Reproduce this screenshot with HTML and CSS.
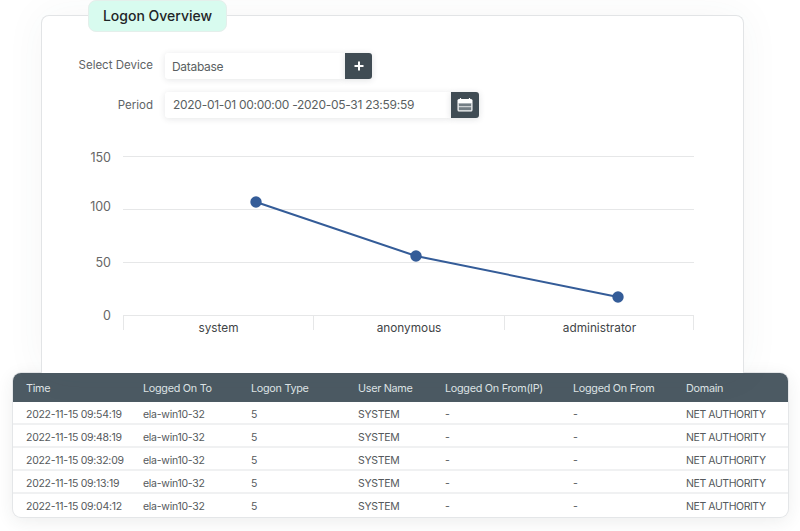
FILE: index.html
```html
<!DOCTYPE html>
<html lang="en">
<head>
<meta charset="utf-8">
<title>Logon Overview</title>
<link rel="stylesheet" href="styles.css">
</head>
<body>
<main class="stage">
  <section class="card">
    <h1 class="tab">Logon Overview</h1>
    <div class="form">
      <div class="field field-device">
        <label class="label">Select Device</label>
        <div class="input input-device">Database</div>
        <button class="btn" aria-label="Add">
          <svg width="12" height="12" viewBox="0 0 12 12"><path d="M6 1.500v9M1.500 6h9" stroke="#fff" stroke-width="2" fill="none"/></svg>
        </button>
      </div>
      <div class="field field-period">
        <label class="label">Period</label>
        <div class="input input-period">2020-01-01 00:00:00 -2020-05-31 23:59:59</div>
        <button class="btn btn-cal" aria-label="Calendar">
          <svg width="16" height="14" viewBox="0 0 16 14"><rect x="0.500" y="1" width="15" height="12.500" rx="1.500" fill="#fff"/><path d="M3.500 0v2M12.500 0v2" stroke="#fff" stroke-width="1.200"/><rect x="1.500" y="5" width="13" height="7.500" fill="#aab1b6"/><path d="M3 6v6M5 6v6M7 6v6M9 6v6M11 6v6M13 6v6" stroke="#3f4c55" stroke-width="1"/><path d="M1.500 8.700h13" stroke="#fff" stroke-width=".8"/></svg>
        </button>
      </div>
    </div>
    <svg class="chart" width="700" height="220" viewBox="42 140 700 220">
      <g class="grid">
        <path d="M123 156.500H694M123 209.500H694M123 262.500H694M123 315.500H694M123.500 315V330M313.500 315V330M504.500 315V330M693.500 315V330"/>
      </g>
      <g class="ylabels">
        <text x="111" y="162">150</text>
        <text x="111" y="211">100</text>
        <text x="111" y="267">50</text>
        <text x="111" y="320">0</text>
      </g>
      <g class="xlabels">
        <text x="218.500" y="332">system</text>
        <text x="409" y="332">anonymous</text>
        <text x="599.500" y="332">administrator</text>
      </g>
      <path class="line" d="M256 202L416 256L618 297"/>
      <g class="dots">
        <circle cx="256" cy="202" r="5.700"/>
        <circle cx="416" cy="256" r="5.700"/>
        <circle cx="618" cy="297" r="5.700"/>
      </g>
    </svg>
  </section>
  <section class="table">
    <div class="row head"><span>Time</span><span>Logged On To</span><span>Logon Type</span><span>User Name</span><span>Logged On From(IP)</span><span>Logged On From</span><span>Domain</span></div>
    <div class="row"><span>2022-11-15 09:54:19</span><span>ela-win10-32</span><span>5</span><span>SYSTEM</span><span>-</span><span>-</span><span>NET AUTHORITY</span></div>
    <div class="row"><span>2022-11-15 09:48:19</span><span>ela-win10-32</span><span>5</span><span>SYSTEM</span><span>-</span><span>-</span><span>NET AUTHORITY</span></div>
    <div class="row"><span>2022-11-15 09:32:09</span><span>ela-win10-32</span><span>5</span><span>SYSTEM</span><span>-</span><span>-</span><span>NET AUTHORITY</span></div>
    <div class="row"><span>2022-11-15 09:13:19</span><span>ela-win10-32</span><span>5</span><span>SYSTEM</span><span>-</span><span>-</span><span>NET AUTHORITY</span></div>
    <div class="row"><span>2022-11-15 09:04:12</span><span>ela-win10-32</span><span>5</span><span>SYSTEM</span><span>-</span><span>-</span><span>NET AUTHORITY</span></div>
  </section>
</main>
</body>
</html>
```
FILE: styles.css
```css
* { box-sizing: border-box; }
html, body { margin: 0; padding: 0; background: #fff; }
body { font-family: Inter, "Liberation Sans", sans-serif; color: #555; overflow: hidden; }
.stage { width: 800px; height: 531px; padding-top: 15px; overflow: hidden; }

.card {
  position: relative;
  width: 703px;
  height: 358px;
  margin-left: 41px;
  background: #fff;
  border: 1px solid #e2e4e6;
  border-bottom: 0;
  border-radius: 8px 8px 0 0;
  box-shadow: 0 0 40px rgba(60, 70, 80, .05);
}
.tab {
  position: absolute;
  left: 46px;
  top: -16px;
  width: 139px;
  height: 32px;
  margin: 0;
  padding-top: 6px;
  text-align: center;
  font-size: 14px;
  line-height: 17px;
  font-weight: 500;
  color: #1f2527;
  background: #d8fbef;
  border: 1px solid #e4efeb;
  border-radius: 8px;
}

.form { display: flex; flex-direction: column; gap: 13px; padding-top: 37px; }
.field { display: flex; align-items: stretch; height: 26px; }
.label {
  width: 111px;
  margin-right: 12px;
  text-align: right;
  font-size: 11.500px;
  line-height: 24px;
  color: #5e6366;
}
.field-period .label { line-height: 26px; }
.input {
  font-size: 12px;
  line-height: 27px;
  color: #5a5f62;
  background: #fff;
  border-radius: 3px 0 0 3px;
  box-shadow: 0 1px 6px rgba(40, 50, 60, .12);
}
.input-device { width: 180px; padding-left: 7px; letter-spacing: -.3px; }
.input-period { width: 286px; padding-left: 8px; letter-spacing: -.28px; line-height: 26px; }
.btn {
  display: flex;
  align-items: center;
  justify-content: center;
  width: 27px;
  padding: 0;
  border: 0;
  background: #404c54;
  border-radius: 0 3px 3px 0;
  box-shadow: 0 1px 6px rgba(40, 50, 60, .15);
}
.btn-cal { width: 28px; }

.chart { display: block; margin-top: 22px; }
.grid path { stroke: #e6e7e8; stroke-width: 1; fill: none; }
.ylabels text { font-size: 12.500px; fill: #666; text-anchor: end; }
.xlabels text { font-size: 11.800px; fill: #3f4446; text-anchor: middle; }
.line { fill: none; stroke: #345c98; stroke-width: 2; }
.dots circle { fill: #345c98; }

.table {
  width: 775px;
  height: 144px;
  margin-left: 13px;
  background: #fff;
  border-radius: 8px;
  box-shadow: 0 0 0 1px #e4e6e8, 0 4px 18px rgba(40, 50, 60, .09);
  overflow: hidden;
}
.row {
  display: grid;
  grid-template-columns: 117px 108px 107px 87px 128px 113px 1fr;
  align-items: center;
  height: 23px;
  padding: 4px 0 0 13px;
  font-size: 10.500px;
  letter-spacing: -.27px;
  color: #55595c;
  border-bottom: 2px solid #f0f1f2;
}
.row span:last-child { letter-spacing: -.42px; }
.row:last-child { border-bottom: 0; padding-top: 2px; }
.head {
  height: 29px;
  padding-top: 2px;
  font-size: 10.800px;
  letter-spacing: -.28px;
  color: #dfe4e6;
  background: #4c5a63;
  border-bottom: 0;
}
.head span:last-child { letter-spacing: -.28px; }
```
